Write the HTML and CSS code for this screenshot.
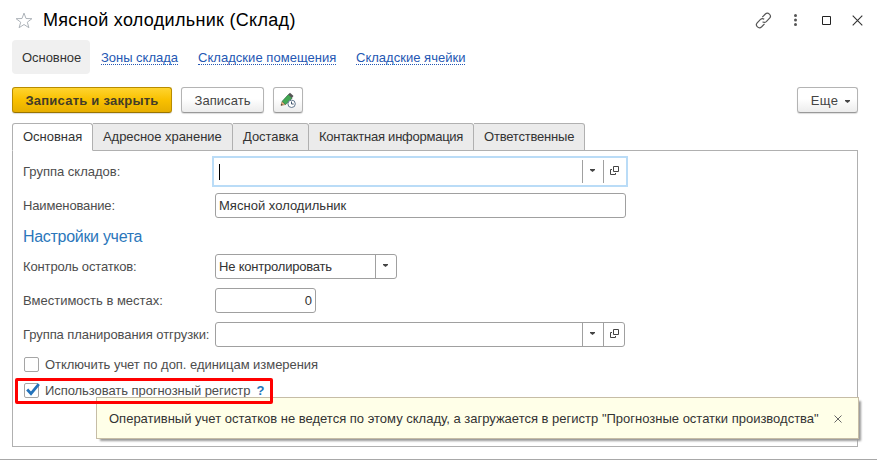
FILE: index.html
```
<!DOCTYPE html>
<html lang="ru">
<head>
<meta charset="utf-8">
<title>Мясной холодильник (Склад)</title>
<link rel="stylesheet" href="styles.css">
</head>
<body>
<div class="window">
  <header class="titlebar">
    <svg class="star" width="18" height="17" viewBox="0 0 18 17"><path d="M9 1.100l2 5.400 5.900.2-4.600 3.500 1.600 5.500L9 12.500l-4.900 3.200 1.600-5.500L1.100 6.700 7 6.500z" fill="none" stroke="#adb3b9"/></svg>
    <h1><span class="t-title">Мясной холодильник (Склад)</span></h1>
    <div class="tools">
      <svg class="link-ico" width="17" height="17" viewBox="0 0 17 17" fill="none" stroke="#555" stroke-width="1.200"><path d="M7.300 5.200l2.800-2.900c2.900-2.700 7 .9 4.500 3.900l-3.300 3.400c-1.100 1-2.600 1-3.700.2M9.500 11.800l-2.800 2.900c-2.900 2.700-7-.9-4.500-3.900l3.300-3.400c1.100-1 2.600-1 3.700-.2"/></svg>
      <svg class="dots" width="3" height="12" viewBox="0 0 3 12" fill="#555"><circle cx="1.500" cy="1.500" r="1.500"/><circle cx="1.500" cy="6" r="1.500"/><circle cx="1.500" cy="10.500" r="1.500"/></svg>
      <svg class="max" width="9" height="9" viewBox="0 0 9 9"><path d="M.5.5h8v8h-8z" fill="none" stroke="#222"/></svg>
      <svg width="11" height="11" viewBox="0 0 11 11"><path d="M.7.7l9.600 9.600M10.300.7L.7 10.300" stroke="#333" stroke-width="1.100"/></svg>
    </div>
  </header>
  <nav class="sections">
    <span class="current"><span class="t-main">Основное</span></span>
    <a class="l1">Зоны склада</a>
    <a class="l2">Складские помещения</a>
    <a class="l3">Складские ячейки</a>
  </nav>
  <div class="commands">
    <button class="btn primary"><span class="t-save">Записать и закрыть</span></button>
    <button class="btn write"><span class="t-write">Записать</span></button>
    <button class="btn icon"><svg width="17" height="17" viewBox="0 0 17 17">
      <path d="M1 13.500l1-4 3.400 3z" fill="#edb87c" stroke="#8c6a4a" stroke-width=".6"/><path d="M1 13.500l.5-1.800 1.300 1z" fill="#333"/>
      <path d="M2.200 9.300L8.400 2.500l3.800 3.400-6.600 6.700z" fill="#43a853" stroke="#2c7045" stroke-width=".7"/>
      <path d="M8.200 2.500L10 .7l3.500 3.300-1.700 1.900z" fill="#555"/>
      <circle cx="11.600" cy="11.800" r="3.700" fill="#fff" stroke="#60758c"/><path d="M11.500 9.500v2.500h2.200" fill="none" stroke="#40566d"/></svg></button>
    <button class="btn more"><span class="t-more">Еще</span><svg class="caret" width="5" height="3" viewBox="0 0 5 3"><path d="M0 0h5v1L2.500 3 0 1z" fill="#444"/></svg></button>
  </div>
  <div class="tabs">
    <div class="tab active w1"><span class="tb1">Основная</span></div>
    <div class="tab w2"><span class="tb2">Адресное хранение</span></div>
    <div class="tab w3"><span class="tb3">Доставка</span></div>
    <div class="tab w4"><span class="tb4">Контактная информация</span></div>
    <div class="tab w5"><span class="tb5">Ответственные</span></div>
  </div>
  <main class="panel">
    <div class="row"><label><span class="f1">Группа складов:</span></label>
      <div class="field focus"><span class="value"><i class="cursor"></i></span><span class="pick"><svg class="caret" width="5" height="3" viewBox="0 0 5 3"><path d="M0 0h5v1L2.500 3 0 1z" fill="#444"/></svg></span><span class="pick open"><svg width="9" height="9" viewBox="0 0 9 9"><path d="M3.500.5h5v5h-5zM2 3.500H.5v5h5V7" fill="none" stroke="#444"/></svg></span></div></div>
    <div class="row"><label><span class="f2">Наименование:</span></label>
      <div class="field"><span class="value"><span class="v2">Мясной холодильник</span></span></div></div>
    <h2><span class="t-sub">Настройки учета</span></h2>
    <div class="row"><label><span class="f3">Контроль остатков:</span></label>
      <div class="field select"><span class="value"><span class="v3">Не контролировать</span></span><span class="pick"><svg class="caret" width="5" height="3" viewBox="0 0 5 3"><path d="M0 0h5v1L2.500 3 0 1z" fill="#444"/></svg></span></div></div>
    <div class="row"><label><span class="f4">Вместимость в местах:</span></label>
      <div class="field number"><span class="value">0</span></div></div>
    <div class="row"><label><span class="f5">Группа планирования отгрузки:</span></label>
      <div class="field planning"><span class="value"></span><span class="pick"><svg class="caret" width="5" height="3" viewBox="0 0 5 3"><path d="M0 0h5v1L2.500 3 0 1z" fill="#444"/></svg></span><span class="pick open"><svg width="9" height="9" viewBox="0 0 9 9"><path d="M3.500.5h5v5h-5zM2 3.500H.5v5h5V7" fill="none" stroke="#444"/></svg></span></div></div>
    <div class="check"><i class="box"></i><span class="c1">Отключить учет по доп. единицам измерения</span></div>
    <div class="check"><i class="box"><svg class="tick" width="14" height="14" viewBox="0 0 14 14"><path d="M1.200 6.500L5 10.700l7.800-9.500" fill="none" stroke="#2473bb" stroke-width="2.800"/></svg></i><span class="c2">Использовать прогнозный регистр</span><b class="help">?</b>
      <div class="tooltip"><span class="tip">Оперативный учет остатков не ведется по этому складу, а загружается в регистр "Прогнозные остатки производства"</span><svg width="8" height="8" viewBox="0 0 8 8"><path d="M.5.5l7 7M7.500.5l-7 7" stroke="#666"/></svg></div>
      <div class="highlight"></div>
    </div>
  </main>
</div>
</body>
</html>
```
FILE: styles.css
```
* { box-sizing: border-box; }
body { margin: 0; background: #fff; color: #333; font: 13px/16px "Liberation Sans", Arial, sans-serif; }
.window { height: 460px; border-bottom: 1px solid #a8a8a8; overflow: hidden; letter-spacing: 0; white-space: nowrap; }
svg { display: block; flex: none; }
.titlebar { display: flex; align-items: center; height: 40px; padding: 0 14px 0 15px; }
h1 { margin: 0 0 0 10px; font-size: 18px; line-height: 22px; font-weight: 400; color: #000; flex: 1; letter-spacing: .3px; }
.tools { display: flex; align-items: center; }
.link-ico { margin-right: 22px; }
.dots { margin-right: 25px; }
.max { margin-right: 21px; }
.sections { display: flex; height: 34px; margin-left: 12px; align-items: center; }
.current { display: flex; align-items: center; width: 78px; height: 34px; padding: 2px 0 0 10px; background: #f0f0f0; border-radius: 4px; }
.t-main { letter-spacing: -.05px; }
.sections a { color: #2457b3; line-height: 13px; margin-top: 2px; border-bottom: 1px dotted #2457b3; }
.sections .l1 { margin-left: 11px; width: 77px; letter-spacing: -.02px; }
.sections .l2 { margin-left: 20px; width: 138px; letter-spacing: .04px; }
.sections .l3 { margin-left: 20px; width: 109px; letter-spacing: .02px; }
.commands { display: flex; margin: 13px 19px 0 12px; height: 26px; }
.btn { display: flex; align-items: center; justify-content: center; height: 26px; padding: 1px 0 0; border: 1px solid #b4b4b4; border-bottom-color: #999; border-radius: 3px; background: linear-gradient(#fff 45%, #ececec); color: #444; font: inherit; letter-spacing: .05px; box-shadow: 0 1px 1px #ddd; }
.primary { width: 160px; border-color: #b88c00; border-bottom-color: #997400; background: linear-gradient(#ffd42f, #f9c000 50%, #e6ae00); font-weight: 700; color: #433c28; letter-spacing: .24px; }
.write { width: 83px; margin-left: 9px; }
.icon { width: 30px; margin-left: 9px; }
.more { width: 61px; margin-left: auto; gap: 7px; padding-left: 6px; letter-spacing: .3px; }
.more .caret { margin-top: 2px; }
.tabs { display: flex; margin: 10px 0 -1px 12px; height: 28px; position: relative; }
.tab { height: 28px; padding: 5px 0 0 10px; border: 1px solid #b0b0b0; border-left: 0; background: #ebebeb; border-radius: 0 3px 0 0; }
.tab.active { background: #fff; border-left: 1px solid #b0b0b0; border-bottom-color: #fff; border-radius: 3px 3px 0 0; }
.w1 { width: 81px; } .w2 { width: 140px; } .w3 { width: 76px; } .w4 { width: 165px; } .w5 { width: 111px; }
.tb1 { letter-spacing: -.02px; }
.tb2, .tb3 { letter-spacing: -.05px; }
.tb4 { letter-spacing: -.25px; }
.tb5 { letter-spacing: -.2px; }
.panel { height: 297px; width: 846px; margin-left: 12px; padding: 8px 0 0 10px; border: 1px solid #b0b0b0; }
.row { display: flex; align-items: center; height: 25px; margin-bottom: 9px; }
label { width: 192px; color: #4d4d4d; }
.f2, .f3 { letter-spacing: -.14px; }
.f5 { letter-spacing: -.07px; }
.field { display: flex; width: 411px; height: 25px; border: 1px solid #a0a0a0; border-radius: 3px; background: #fff; }
.focus { width: 410px; border-color: #fff; outline: 2px solid #badcf7; outline-offset: 1px; border-radius: 0; }
.planning { width: 410px; }
.value { flex: 1; display: flex; align-items: center; padding: 0 4px 0 3px; }
.v2 { letter-spacing: .02px; }
.v3 { letter-spacing: -.2px; }
.cursor { width: 1px; height: 16px; background: #000; }
.pick { width: 21px; border-left: 1px solid #a0a0a0; display: flex; align-items: center; justify-content: center; }
.pick .caret { margin: -2px 1px 0 0; }
.open { padding: 0 0 2px 1px; }
.select { width: 182px; }
.number { width: 101px; }
.number .value { justify-content: flex-end; padding-right: 3px; }
h2 { margin: 0 0 9px; height: 18px; font-size: 16px; line-height: 19px; font-weight: 400; color: #2b77bb; letter-spacing: -.3px; }
.check { position: relative; display: flex; align-items: center; height: 15px; margin: 0 0 11px 1px; color: #4d4d4d; }
.row + .check { margin-top: 10px; }
.box { width: 15px; height: 15px; border: 1px solid #a5a5a5; border-radius: 2px; margin-right: 6px; }
.c1 { letter-spacing: -.04px; }
.c2 { letter-spacing: -.06px; }
.help { color: #2173b8; margin-left: 6px; }
.tooltip { position: absolute; left: 72px; top: 14px; width: 763px; height: 42px; padding: 1px 16px 0 12px; display: flex; align-items: center; justify-content: space-between; border: 1px solid #c6bda6; background: #ffffe8; color: #333; box-shadow: 3px 3px 2px -1px #999; }
.highlight { position: absolute; left: -9px; top: -5px; width: 258px; height: 26px; border: 3px solid #f00; border-radius: 2px; }
.tick { margin: -1px 0 0 1px; }
```
